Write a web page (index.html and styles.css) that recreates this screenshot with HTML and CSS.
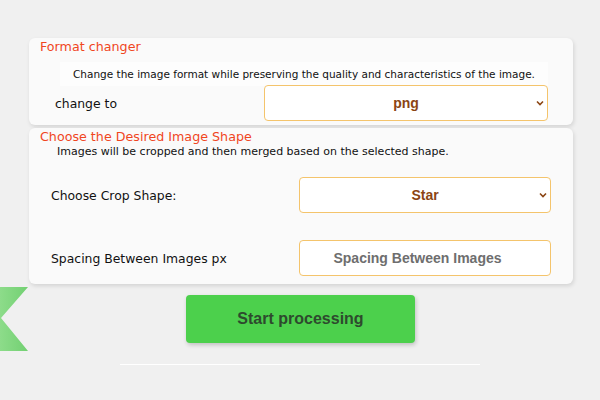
FILE: index.html
```html
<!DOCTYPE html>
<html lang="en">
<head>
    <meta charset="UTF-8">
    <meta name="viewport" content="width=device-width, initial-scale=1.0">
    <title>Image Tools</title>
    <link rel="stylesheet" href="styles.css">
</head>
<body>
    <div class="corner">
        <svg width="28" height="64" viewBox="0 0 28 64">
            <defs>
                <linearGradient id="g" x1="0" y1="0" x2="1" y2="0">
                    <stop offset="0" stop-color="#8ddc8a"/>
                    <stop offset="1" stop-color="#72d072"/>
                </linearGradient>
            </defs>
            <polygon points="0,0 28,0 1,31 28,64 0,64" fill="url(#g)"/>
        </svg>
    </div>

    <div class="page">
        <div class="card card-format">
            <div class="card-title">Format changer</div>
            <div class="card-desc desc-wide">Change the image format while preserving the quality and characteristics of the image.</div>
            <div class="row row-format">
                <label for="format">change to</label>
                <div class="select-wrap wide">
                    <select id="format">
                        <option>png</option>
                        <option>jpg</option>
                        <option>webp</option>
                    </select>
                    <svg class="chev" width="8" height="6" viewBox="0 0 8 6"><path d="M1 1.5 L4 4.5 L7 1.5" fill="none" stroke="#8b4513" stroke-width="1.6"/></svg>
                </div>
            </div>
        </div>

        <div class="card card-shape">
            <div class="card-title">Choose the Desired Image Shape</div>
            <div class="card-desc desc-left">Images will be cropped and then merged based on the selected shape.</div>
            <div class="row row-shape">
                <label for="shape">Choose Crop Shape:</label>
                <div class="select-wrap">
                    <select id="shape">
                        <option>Star</option>
                        <option>Circle</option>
                        <option>Heart</option>
                    </select>
                    <svg class="chev" width="8" height="6" viewBox="0 0 8 6"><path d="M1 1.5 L4 4.5 L7 1.5" fill="none" stroke="#8b4513" stroke-width="1.6"/></svg>
                </div>
            </div>
            <div class="row row-spacing">
                <label for="spacing">Spacing Between Images px</label>
                <input type="number" id="spacing" class="spacing-input" placeholder="Spacing Between Images">
            </div>
        </div>

        <div class="actions">
            <button type="button" class="start">Start processing</button>
        </div>
        <div class="divider"></div>
    </div>
</body>
</html>
```

FILE: styles.css
```css
body {
    margin: 0;
    padding: 0;
    background-color: #F0F0F0;
    font-family: "Comic Sans MS", "DejaVu Sans", sans-serif;
    color: #111111;
}
.corner {
    position: absolute;
    left: 0;
    top: 287px;
    line-height: 0;
}
.page {
    padding-top: 38px;
}
.card {
    width: 544px;
    margin-left: 29px;
    background-color: #FAFAFA;
    border-radius: 6px;
    box-shadow: 1px 2px 4px rgba(0, 0, 0, 0.12);
}
.card-format {
    height: 87px;
}
.card-shape {
    margin-top: 3px;
    height: 156px;
}
.card-title {
    color: #F0461E;
    font-size: 12.7px;
    line-height: 17px;
    padding-left: 11px;
}
.card-desc {
    line-height: 14px;
}
.desc-wide {
    margin: 7px 25px 0 31px;
    padding: 5px 0;
    background-color: #FDFDFD;
    text-align: center;
    font-size: 10.5px;
}
.desc-left {
    padding-left: 28px;
    font-size: 11px;
}
.row {
    display: flex;
    align-items: center;
    justify-content: space-between;
}
.row label {
    font-size: 12.4px;
    white-space: nowrap;
    flex-shrink: 0;
}
.row-format {
    margin-top: -1px;
    padding: 0 25px 0 26px;
}
.row-shape {
    margin-top: 18px;
    padding: 0 22px 0 22px;
}
.row-spacing {
    margin-top: 27px;
    padding: 0 22px 0 22px;
}
.select-wrap {
    position: relative;
    width: 252px;
}
.select-wrap.wide {
    width: 284px;
}
select, input {
    display: block;
    width: 100%;
    height: 36px;
    box-sizing: border-box;
    border: 1px solid #F4C46C;
    border-radius: 4px;
    background-color: #FFFFFF;
    font-family: "Liberation Sans", Arial, sans-serif;
    font-size: 14px;
    font-weight: bold;
    text-align: center;
    text-align-last: center;
    outline: none;
}
.spacing-input {
    width: 252px;
}
select {
    appearance: none;
    color: #8B4513;
}
input::placeholder {
    color: #6E6E6E;
}
.chev {
    position: absolute;
    right: 4px;
    top: 15px;
}
.actions {
    display: flex;
    justify-content: center;
    margin-top: 11px;
}
.start {
    width: 229px;
    height: 48px;
    margin-left: 1px;
    background-color: #4CD04C;
    border: none;
    border-radius: 4px;
    color: #2E4A2E;
    font-family: "Liberation Sans", Arial, sans-serif;
    font-size: 16px;
    font-weight: bold;
    box-shadow: 1px 2px 4px rgba(0, 0, 0, 0.2);
    cursor: pointer;
}
.divider {
    width: 360px;
    height: 1px;
    margin: 21px auto 0;
    background-color: #FFFFFF;
}
```
